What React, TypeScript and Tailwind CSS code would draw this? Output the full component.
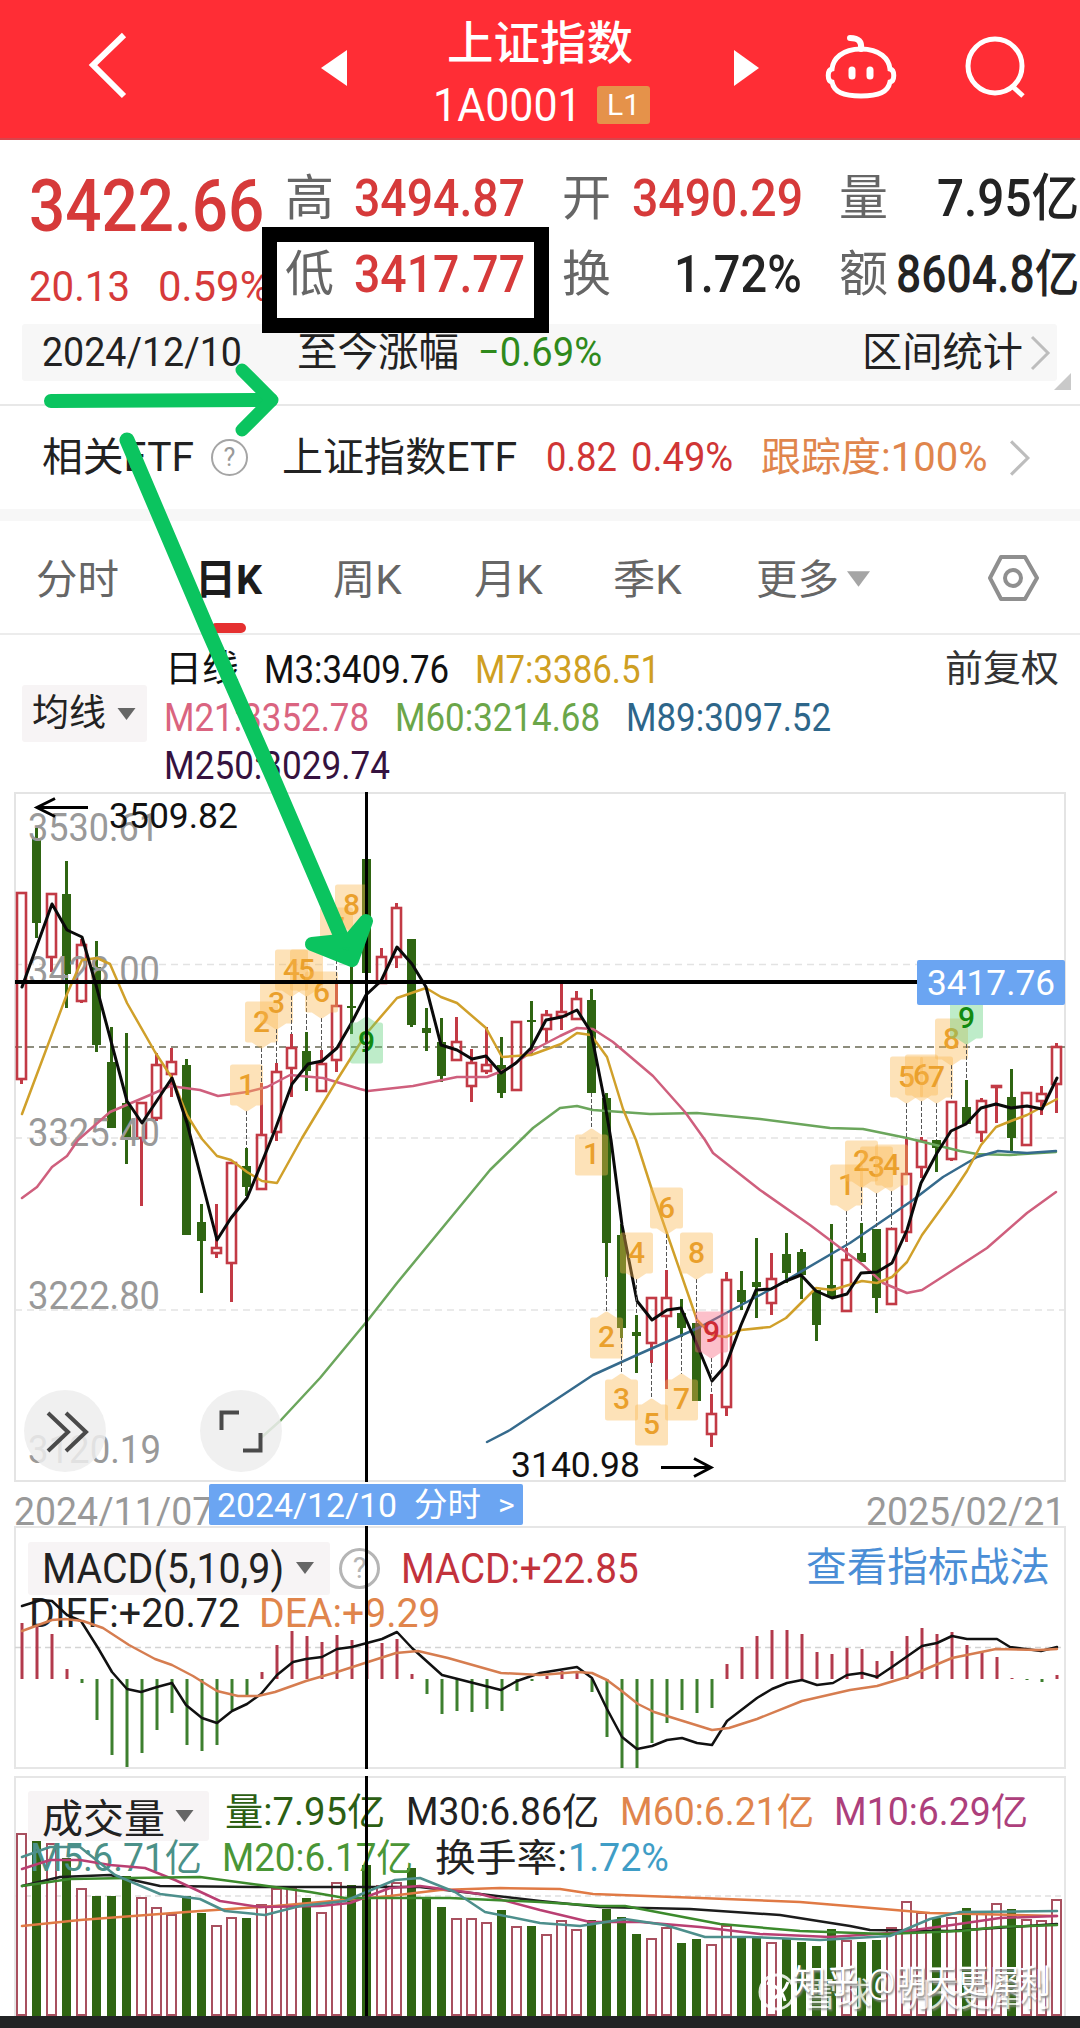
import { useLayoutEffect, useRef, useState } from 'react'
import type { ReactNode } from 'react'
import { clsx } from 'clsx'

type Point = [number, number]

// kind, body top, body bottom, high, low
type Candle = ['r' | 'g', number, number, number, number]

const candles: Candle[] = [
  ['r', 892, 1079, 892, 1084],
  ['g', 838, 923, 828, 938],
  ['r', 893, 957, 893, 972],
  ['g', 894, 974, 861, 1008],
  ['r', 944, 1001, 939, 1003],
  ['g', 967, 1045, 941, 1052],
  ['g', 1062, 1128, 1027, 1128],
  ['g', 1103, 1137, 1033, 1164],
  ['r', 1102, 1138, 1102, 1206],
  ['r', 1064, 1118, 1053, 1121],
  ['r', 1061, 1074, 1048, 1097],
  ['g', 1065, 1235, 1059, 1235],
  ['g', 1222, 1241, 1204, 1293],
  ['r', 1247, 1253, 1204, 1258],
  ['r', 1162, 1263, 1162, 1302],
  ['g', 1166, 1187, 1148, 1196],
  ['r', 1134, 1189, 1083, 1189],
  ['r', 1071, 1132, 1063, 1141],
  ['r', 1047, 1068, 1034, 1097],
  ['g', 1051, 1071, 1032, 1091],
  ['r', 1063, 1091, 1050, 1091],
  ['r', 1005, 1060, 983, 1072],
  ['g', 1006, 1008, 965, 1034],
  ['g', 859, 973, 859, 973],
  ['r', 956, 983, 948, 983],
  ['r', 907, 957, 903, 968],
  ['g', 939, 1025, 939, 1027],
  ['g', 1028, 1033, 1008, 1051],
  ['g', 1042, 1076, 1018, 1082],
  ['r', 1041, 1060, 1017, 1060],
  ['r', 1062, 1086, 1049, 1102],
  ['r', 1064, 1071, 1027, 1074],
  ['g', 1065, 1093, 1037, 1098],
  ['r', 1021, 1090, 1021, 1090],
  ['g', 1020, 1022, 1001, 1054],
  ['r', 1014, 1029, 1010, 1043],
  ['r', 1011, 1016, 980, 1030],
  ['r', 998, 1019, 991, 1019],
  ['g', 1000, 1093, 989, 1093],
  ['g', 1098, 1243, 1093, 1277],
  ['g', 1235, 1328, 1224, 1338],
  ['g', 1332, 1336, 1315, 1373],
  ['r', 1297, 1343, 1297, 1363],
  ['r', 1297, 1316, 1270, 1389],
  ['g', 1313, 1328, 1299, 1337],
  ['g', 1323, 1401, 1323, 1401],
  ['r', 1413, 1434, 1394, 1447],
  ['r', 1279, 1407, 1272, 1416],
  ['g', 1290, 1302, 1271, 1310],
  ['g', 1282, 1287, 1238, 1318],
  ['r', 1278, 1303, 1253, 1315],
  ['g', 1254, 1273, 1233, 1283],
  ['g', 1252, 1275, 1249, 1299],
  ['g', 1290, 1325, 1290, 1341],
  ['g', 1285, 1297, 1224, 1297],
  ['r', 1259, 1311, 1248, 1311],
  ['g', 1253, 1262, 1223, 1262],
  ['g', 1229, 1298, 1229, 1313],
  ['r', 1228, 1304, 1228, 1304],
  ['r', 1173, 1232, 1139, 1242],
  ['r', 1140, 1167, 1137, 1178],
  ['g', 1140, 1148, 1140, 1172],
  ['r', 1101, 1159, 1101, 1161],
  ['g', 1107, 1124, 1080, 1124],
  ['r', 1100, 1132, 1098, 1142],
  ['r', 1085, 1087, 1085, 1123],
  ['g', 1097, 1138, 1069, 1153],
  ['r', 1092, 1145, 1092, 1145],
  ['r', 1093, 1101, 1086, 1115],
  ['r', 1046, 1084, 1043, 1113],
]

const m3: Point[] = [
  [22, 987], [52, 904], [67, 930], [82, 937], [96, 985], [127, 1101], [142, 1123], [172, 1078],
  [187, 1123], [217, 1240], [231, 1218], [247, 1198], [262, 1162], [275, 1130], [292, 1084],
  [308, 1064], [322, 1061], [337, 1048], [352, 1022], [366, 995], [381, 981], [397, 947],
  [412, 964], [426, 987], [441, 1045], [457, 1050], [472, 1059], [486, 1056], [501, 1073],
  [516, 1063], [531, 1048], [546, 1020], [562, 1017], [577, 1010], [591, 1032], [604, 1098],
  [611, 1140], [622, 1225], [637, 1301], [652, 1320], [667, 1310], [681, 1308], [695, 1340],
  [712, 1381], [726, 1365], [741, 1325], [756, 1290], [771, 1289], [786, 1281], [801, 1275],
  [816, 1291], [832, 1298], [847, 1294], [861, 1273], [877, 1272], [892, 1263], [907, 1230],
  [921, 1183], [937, 1153], [951, 1131], [966, 1124], [981, 1108], [996, 1104], [1011, 1108],
  [1027, 1106], [1042, 1109], [1057, 1078],
]
const m7: Point[] = [
  [22, 1114], [67, 994], [82, 960], [97, 958], [110, 964], [127, 1003], [155, 1052], [172, 1078],
  [187, 1115], [202, 1139], [217, 1156], [231, 1160], [247, 1172], [262, 1181], [277, 1183],
  [302, 1138], [337, 1080], [366, 1034], [397, 998], [426, 988], [441, 997], [457, 1003],
  [486, 1028], [502, 1057], [531, 1055], [561, 1044], [577, 1033], [591, 1035], [607, 1057],
  [623, 1109], [636, 1140], [652, 1190], [697, 1320], [712, 1335], [726, 1337], [741, 1330],
  [770, 1327], [786, 1318], [816, 1288], [832, 1290], [862, 1281], [877, 1283], [892, 1277],
  [907, 1262], [922, 1235], [951, 1195], [967, 1171], [981, 1145], [996, 1127], [1011, 1121],
  [1027, 1115], [1042, 1107], [1057, 1099],
]
const m21: Point[] = [
  [22, 1198], [37, 1187], [52, 1167], [67, 1156], [78, 1140], [110, 1112], [150, 1095],
  [170, 1086], [200, 1090], [218, 1096], [247, 1092], [267, 1087], [290, 1075], [323, 1078],
  [360, 1089], [368, 1091], [413, 1086], [457, 1077], [487, 1077], [507, 1069], [537, 1048],
  [560, 1036], [577, 1028], [593, 1029], [613, 1042], [653, 1076], [685, 1112], [705, 1140],
  [713, 1153], [760, 1190], [810, 1225], [863, 1265], [883, 1283], [907, 1293], [922, 1290],
  [950, 1272], [987, 1248], [1027, 1213], [1056, 1192],
]
const m60: Point[] = [
  [262, 1437], [281, 1420], [320, 1378], [368, 1320], [397, 1283], [490, 1170], [533, 1128],
  [560, 1108], [577, 1106], [593, 1110], [650, 1114], [697, 1113], [760, 1119], [830, 1128],
  [863, 1129], [907, 1138], [960, 1151], [977, 1154], [1010, 1155], [1056, 1152],
]
const m89: Point[] = [
  [487, 1442], [510, 1430], [593, 1375], [637, 1355], [698, 1328], [760, 1295], [773, 1288],
  [850, 1243], [913, 1200], [943, 1177], [977, 1157], [998, 1151], [1027, 1153], [1056, 1151],
]

// candle index, digit, y of the flat edge, direction of the tip
const pins: [number, string, number, 'up' | 'down', string?][] = [
  [15, '1', 1065, 'down'],
  [16, '2', 1002, 'down'],
  [17, '3', 983, 'down'],
  [18, '4', 950, 'down'],
  [19, '5', 950, 'down'],
  [20, '6', 972, 'down'],
  [21, '7', 908, 'down'],
  [22, '8', 885, 'down'],
  [23, '9', 1063, 'up', 'green'],
  [38, '1', 1175, 'up'],
  [39, '2', 1358, 'up'],
  [40, '3', 1420, 'up'],
  [41, '4', 1233, 'down'],
  [42, '5', 1445, 'up'],
  [43, '6', 1188, 'down'],
  [44, '7', 1420, 'up'],
  [45, '8', 1233, 'down'],
  [46, '9', 1312, 'down', 'red'],
  [55, '1', 1165, 'down'],
  [56, '2', 1141, 'down'],
  [57, '3', 1147, 'down'],
  [58, '4', 1145, 'down'],
  [59, '5', 1057, 'down'],
  [60, '6', 1055, 'down'],
  [61, '7', 1057, 'down'],
  [62, '8', 1019, 'down'],
  [63, '9', 998, 'down', 'green'],
]

// end of each histogram bar, the zero line is 1679
const macdBars = [
  1623, 1626, 1634, 1669, 1683, 1720, 1755, 1767, 1753, 1730, 1713, 1745, 1751, 1745, 1710, 1697,
  1672, 1645, 1631, 1636, 1642, 1635, 1640, 1642, 1643, 1639, 1674, 1694, 1714, 1711, 1712, 1709,
  1711, 1691, 1681, 1676, 1671, 1671, 1692, 1737, 1768, 1768, 1743, 1723, 1710, 1713, 1708, 1664,
  1647, 1636, 1630, 1630, 1634, 1652, 1654, 1648, 1649, 1661, 1651, 1636, 1628, 1634, 1632, 1645,
  1652, 1657, 1678, 1680, 1682, 1675,
]
const diff: Point[] = [
  [22, 1606], [41, 1600], [52, 1601], [67, 1615], [81, 1621], [98, 1648], [112, 1672],
  [127, 1689], [141, 1692], [157, 1687], [172, 1683], [186, 1705], [202, 1718], [217, 1723],
  [232, 1711], [247, 1704], [261, 1694], [277, 1675], [293, 1662], [306, 1659], [322, 1657],
  [337, 1649], [352, 1647], [382, 1639], [397, 1632], [412, 1648], [442, 1675], [501, 1690],
  [517, 1681], [540, 1673], [577, 1667], [592, 1678], [607, 1709], [622, 1737], [637, 1749],
  [652, 1746], [667, 1740], [682, 1738], [697, 1743], [712, 1745], [727, 1721], [757, 1698],
  [772, 1689], [787, 1683], [802, 1680], [817, 1685], [833, 1683], [847, 1675], [862, 1673],
  [877, 1677], [892, 1667], [922, 1646], [937, 1643], [952, 1636], [967, 1639], [997, 1639],
  [1010, 1647], [1041, 1651], [1057, 1647],
]
const dea: Point[] = [
  [22, 1631], [52, 1620], [65, 1619], [83, 1621], [103, 1628], [129, 1645], [155, 1659],
  [172, 1665], [193, 1676], [217, 1691], [238, 1696], [258, 1696], [275, 1692], [306, 1681],
  [337, 1672], [368, 1662], [396, 1653], [418, 1651], [448, 1658], [501, 1673], [540, 1675],
  [577, 1672], [592, 1673], [607, 1680], [623, 1692], [638, 1704], [654, 1712], [683, 1721],
  [712, 1730], [729, 1728], [757, 1719], [802, 1701], [850, 1690], [877, 1686], [907, 1677],
  [952, 1658], [996, 1649], [1039, 1650], [1057, 1649],
]

const volumes = [
  1833, 1834, 1843, 1858, 1888, 1896, 1896, 1876, 1897, 1907, 1914, 1896, 1913, 1925, 1917, 1918,
  1904, 1888, 1888, 1898, 1912, 1882, 1885, 1865, 1885, 1882, 1868, 1899, 1907, 1918, 1918, 1922,
  1910, 1926, 1926, 1934, 1920, 1929, 1920, 1909, 1917, 1934, 1938, 1927, 1943, 1939, 1944, 1925,
  1938, 1937, 1942, 1939, 1942, 1946, 1929, 1940, 1942, 1940, 1927, 1901, 1912, 1918, 1917, 1908,
  1913, 1903, 1909, 1919, 1920, 1899,
]
// volume bars are coloured on their own
const volumeKinds = 'rgrgrgggrrrggrrgrrrgrrggrrgggrrrgrgrrrggggrrggrrggrggggrggrrrgrgrrgrrr'

const volumeLines: { color: string; points: Point[] }[] = [
  {
    color: '#1c1c1c',
    points: [[22, 1886], [60, 1877], [110, 1875], [160, 1886], [260, 1887], [420, 1887], [480, 1894], [540, 1901], [600, 1907], [690, 1909], [780, 1915], [850, 1926], [870, 1930], [950, 1931], [1057, 1924]],
  },
  {
    color: '#e07a45',
    points: [[22, 1926], [80, 1920], [200, 1911], [275, 1906], [390, 1896], [440, 1890], [500, 1888], [560, 1889], [593, 1894], [700, 1898], [800, 1902], [860, 1907], [930, 1913], [1057, 1916]],
  },
  {
    color: '#b93f72',
    points: [[22, 1869], [50, 1860], [80, 1860], [110, 1865], [145, 1868], [175, 1880], [220, 1901], [260, 1907], [320, 1906], [350, 1903], [390, 1888], [420, 1886], [480, 1894], [540, 1910], [590, 1922], [640, 1922], [700, 1927], [760, 1934], [830, 1937], [890, 1933], [945, 1926], [1000, 1918], [1057, 1916]],
  },
  {
    color: '#3c8a2c',
    points: [[22, 1886], [70, 1879], [130, 1878], [200, 1877], [260, 1885], [310, 1892], [345, 1898], [450, 1898], [540, 1902], [600, 1906], [625, 1906], [720, 1924], [800, 1931], [885, 1934], [960, 1931], [1000, 1927], [1057, 1925]],
  },
  {
    color: '#4d8f8c',
    points: [[22, 1857], [50, 1847], [80, 1847], [115, 1875], [160, 1894], [200, 1899], [225, 1911], [265, 1915], [300, 1906], [345, 1901], [395, 1880], [420, 1878], [455, 1892], [485, 1912], [540, 1923], [580, 1926], [625, 1919], [665, 1925], [705, 1937], [750, 1937], [820, 1940], [890, 1936], [930, 1919], [960, 1912], [1057, 1911]],
  },
]

const RED = '#c23a45'
const GREEN = '#2f6512'

const xOf = (i: number) => 21.5 + i * 15
const toPoints = (points: Point[]) => points.map((p) => p.join(',')).join(' ')

// Stretches its text to the width of the box
function Fit({ className, children }: { className: string; children: ReactNode }) {
  const box = useRef<HTMLDivElement>(null)
  const text = useRef<HTMLSpanElement>(null)
  const [scale, setScale] = useState(1)

  useLayoutEffect(() => {
    if (box.current && text.current) {
      setScale(box.current.clientWidth / text.current.offsetWidth)
    }
  }, [])

  return (
    <div ref={box} className={clsx('shrink-0 whitespace-nowrap', className)}>
      <span
        ref={text}
        className="inline-block origin-left"
        style={{ transform: `scaleX(${scale})` }}
      >
        {children}
      </span>
    </div>
  )
}

function Header() {
  return (
    <header className="flex h-[140px] items-start border-b-2 border-[#d9434b] bg-[#ff2d35] text-white">
      <svg className="ml-[86px] mt-[29px] h-[72px] w-[44px]" viewBox="0 0 44 72" fill="none">
        <path d="M38 6 7 36l31 31" stroke="currentColor" strokeWidth="6" />
      </svg>
      <svg className="ml-[191px] mt-[50px] h-[36px] w-[26px]" viewBox="0 0 26 36">
        <path d="M26 0v36L0 18z" fill="currentColor" />
      </svg>
      <div className="ml-[88px] mt-[17px] flex w-[216px] flex-col">
        <Fit className="ml-[12px] h-[53px] w-[186px] text-[46px] font-medium leading-[52px]">
          上证指数
        </Fit>
        <div className="flex h-[70px] items-center">
          <Fit className="ml-[-2px] w-[149px] text-[47px] leading-[70px]">1A0001</Fit>
          <div className="ml-[15px] flex h-[38px] w-[53px] items-center justify-center rounded-[3px] bg-[#e5924a] text-[30px] leading-[38px]">
            L1
          </div>
        </div>
      </div>
      <svg className="ml-[83px] mt-[50px] h-[36px] w-[26px]" viewBox="0 0 26 36">
        <path d="M0 0v36l25-18z" fill="currentColor" />
      </svg>
      <svg
        className="ml-[64px] mt-[32px] h-[70px] w-[74px]"
        viewBox="0 0 74 70"
        fill="none"
        stroke="currentColor"
        strokeLinecap="round"
      >
        <path
          d="M37 17C18 17 9 27 8 37C3 38 3 49 8 50C10 60 19 64 37 64C55 64 64 60 66 50C71 49 71 38 66 37C65 27 56 17 37 17Z"
          strokeWidth="5"
        />
        <path d="M37 17C38 10 35 6 26 6" strokeWidth="6" />
        <path d="M28 38v6M46 38v6" strokeWidth="7" />
      </svg>
      <svg
        className="ml-[64px] mt-[34px] h-[68px] w-[68px]"
        viewBox="0 0 68 68"
        fill="none"
        stroke="currentColor"
        strokeWidth="5"
      >
        <circle cx="33" cy="32" r="27" />
        <path d="m50 52 11 10" />
      </svg>
    </header>
  )
}

function Quote() {
  return (
    <section className="relative flex h-[184px] text-[51px] font-medium leading-[76px] text-[#232323]">
      <div className="ml-[29px] w-[256px] text-[#d63a3a]">
        <Fit className="mt-[29px] h-[74px] w-[235px] text-[73px] leading-[74px]">3422.66</Fit>
        <div className="mt-[12px] flex h-[62px] text-[43px] font-normal leading-[62px]">
          <Fit className="w-[101px]">20.13</Fit>
          <Fit className="ml-[28px] w-[112px]">0.59%</Fit>
        </div>
      </div>
      <div className="mt-[21px] flex flex-col">
        <div className="flex h-[76px]">
          <span className="w-[69px] text-[49px] font-normal text-[#666]">高</span>
          <Fit className="w-[171px] text-[#d63a3a]">3494.87</Fit>
          <span className="ml-[37px] w-[70px] text-[49px] font-normal text-[#666]">开</span>
          <Fit className="w-[171px] text-[#d63a3a]">3490.29</Fit>
          <span className="ml-[36px] w-[98px] text-[49px] font-normal text-[#666]">量</span>
          <Fit className="w-[142px]">7.95亿</Fit>
        </div>
        <div className="flex h-[76px]">
          <span className="w-[69px] text-[49px] font-normal text-[#666]">低</span>
          <Fit className="w-[171px] text-[#d63a3a]">3417.77</Fit>
          <span className="ml-[37px] w-[112px] text-[49px] font-normal text-[#666]">换</span>
          <Fit className="w-[128px]">1.72%</Fit>
          <span className="ml-[37px] w-[57px] text-[49px] font-normal text-[#666]">额</span>
          <Fit className="w-[183px]">8604.8亿</Fit>
        </div>
      </div>
      <div className="absolute left-[262px] top-[87px] z-10 h-[106px] w-[287px] border-[15px] border-black" />
    </section>
  )
}

function Chevron({ className }: { className?: string }) {
  return (
    <svg className={className} viewBox="0 0 22 36" fill="none">
      <path d="m2 2 16 16L2 34" stroke="#bdbdbd" strokeWidth="3" />
    </svg>
  )
}

function Caret({ className }: { className?: string }) {
  return (
    <svg className={className} viewBox="0 0 18 12">
      <path d="M0 0h18L9 12z" fill="currentColor" />
    </svg>
  )
}

function RangeBar() {
  return (
    <section className="relative flex h-[82px] border-b-2 border-[#e8e8e8] pl-[22px]">
      <div className="flex h-[57px] w-[1035px] items-center rounded-[3px] bg-[#f7f7f7] text-[40px] leading-[56px] text-[#222]">
        <Fit className="ml-[20px] w-[200px]">2024/12/10</Fit>
        <Fit className="ml-[55px] w-[162px]">至今涨幅</Fit>
        <Fit className="ml-[19px] w-[124px] text-[#2f8a1c]">−0.69%</Fit>
        <Fit className="ml-[260px] w-[161px] leading-[59px]">区间统计</Fit>
        <Chevron className="ml-[7px] h-[36px] w-[22px]" />
      </div>
      <svg className="absolute left-[1054px] top-[49px] h-[17px] w-[17px]" viewBox="0 0 17 17">
        <path d="M17 0v17H0z" fill="#c9c9c9" />
      </svg>
    </section>
  )
}

function EtfRow() {
  return (
    <section className="flex h-[115px] items-center border-b-[12px] border-[#f7f7f7] text-[40px] leading-[103px] text-[#222]">
      <Fit className="ml-[42px] w-[152px]">相关ETF</Fit>
      <div className="ml-[17px] flex h-[37px] w-[37px] items-center justify-center rounded-full border-2 border-[#a5a5a5] text-[25px] leading-[34px] text-[#999]">
        ?
      </div>
      <Fit className="ml-[34px] w-[235px]">上证指数ETF</Fit>
      <Fit className="ml-[29px] w-[71px] text-[#d03535]">0.82</Fit>
      <Fit className="ml-[14px] w-[102px] text-[#d03535]">0.49%</Fit>
      <Fit className="ml-[28px] w-[226px] text-[#e0854c]">跟踪度:100%</Fit>
      <Chevron className="ml-[22px] h-[38px] w-[23px]" />
    </section>
  )
}

function Tabs() {
  return (
    <nav className="flex h-[114px] border-b-2 border-[#ececec] text-[41px] leading-[118px] text-[#666]">
      <Fit className="ml-[36px] w-[83px]">分时</Fit>
      <div className="ml-[76px] w-[67px]">
        <Fit className="h-[102px] w-[67px] font-bold text-[#1c1c1c]">日K</Fit>
        <div className="ml-[16px] h-[10px] w-[35px] rounded-full bg-[#e53030]" />
      </div>
      <Fit className="ml-[71px] w-[69px]">周K</Fit>
      <Fit className="ml-[72px] w-[69px]">月K</Fit>
      <Fit className="ml-[70px] w-[69px]">季K</Fit>
      <Fit className="ml-[74px] w-[83px]">更多</Fit>
      <Caret className="ml-[8px] mt-[49px] h-[18px] w-[23px] text-[#a5a5a5]" />
      <svg
        className="ml-[117px] mt-[33px] h-[48px] w-[52px]"
        viewBox="0 0 52 48"
        fill="none"
        stroke="#8f8f8f"
        strokeWidth="4"
        strokeLinejoin="round"
      >
        <path d="M14 3h24l12 21-12 21H14L3 24z" />
        <circle cx="26" cy="24" r="8" />
      </svg>
    </nav>
  )
}

function MaLegend() {
  return (
    <section className="flex h-[157px] pt-[11px] text-[39px] leading-[48px]">
      <div className="ml-[22px] mt-[39px] flex h-[57px] w-[125px] items-center rounded-[3px] bg-[#f7f4f5] text-[37px] leading-[57px] text-[#222]">
        <Fit className="ml-[10px] w-[74px]">均线</Fit>
        <Caret className="ml-[11px] h-[12px] w-[19px] text-[#666]" />
      </div>
      <div className="ml-[17px] flex w-[780px] flex-col text-[#111]">
        <div className="flex">
          <Fit className="ml-[1px] w-[74px] text-[37px]">日线</Fit>
          <Fit className="ml-[25px] w-[185px]">M3:3409.76</Fit>
          <Fit className="ml-[26px] w-[185px] text-[#cf9f22]">M7:3386.51</Fit>
        </div>
        <div className="flex">
          <Fit className="w-[205px] text-[#da6480]">M21:3352.78</Fit>
          <Fit className="ml-[26px] w-[205px] text-[#6ba649]">M60:3214.68</Fit>
          <Fit className="ml-[26px] w-[205px] text-[#2d668a]">M89:3097.52</Fit>
        </div>
        <Fit className="w-[226px] text-[#35123f]">M250:3029.74</Fit>
      </div>
      <Fit className="ml-[1px] w-[114px] text-[37px] text-[#333]">前复权</Fit>
    </section>
  )
}

function Pin({ index, digit, y, tip, tone }: { index: number; digit: string; y: number; tip: 'up' | 'down'; tone?: string }) {
  const x = xOf(index)
  const [, , , high, low] = candles[index]
  const fill = tone === 'green' ? '#5fd07a' : tone === 'red' ? '#f8637c' : '#fbb850'
  const color = tone === 'green' ? '#118a11' : tone === 'red' ? '#cf2b35' : '#eaa02c'
  const shape =
    tip === 'down'
      ? `M${x - 14} ${y + 2}h28v36h-5l-9 6l-9 -6h-5z`
      : `M${x - 14} ${y - 2}h28v-36h-5l-9 -6l-9 6h-5z`
  return (
    <g>
      <line
        x1={x}
        x2={x}
        y1={tip === 'down' ? y + 46 : low}
        y2={tip === 'down' ? high : y - 46}
        stroke="#555"
        strokeDasharray="4 2"
      />
      <g opacity="0.4">
        <path d={shape} fill={fill} stroke={fill} strokeWidth="5" strokeLinejoin="round" />
      </g>
      <text
        x={x}
        y={tip === 'down' ? y + 30 : y - 11}
        fontSize="30"
        fontWeight="500"
        textAnchor="middle"
        fill={color}
      >
        {digit}
      </text>
    </g>
  )
}

function Line({ points, color, width = 2.5 }: { points: Point[]; color: string; width?: number }) {
  return (
    <polyline
      points={toPoints(points)}
      fill="none"
      stroke={color}
      strokeWidth={width}
      strokeLinejoin="round"
      strokeLinecap="round"
    />
  )
}

function AxisLabel({ x, y, w, children, fill = '#999', size = 38 }: { x: number; y: number; w: number; children: string; fill?: string; size?: number }) {
  return (
    <text x={x} y={y} fontSize={size} fill={fill} textLength={w} lengthAdjust="spacingAndGlyphs">
      {children}
    </text>
  )
}

function PriceChart() {
  return (
    <svg className="block h-[690px] w-full" viewBox="0 792 1080 690">
      <rect x="15" y="793" width="1050" height="688" fill="none" stroke="#e4e4e4" strokeWidth="2" />
      <g stroke="#e3e3e3" strokeWidth="1.5" strokeDasharray="7 5">
        <path d="M15 964.500H1065M15 1138H1065M15 1310H1065" />
      </g>
      <path d="M15 1047H1065" stroke="#8d8d7d" strokeWidth="2" strokeDasharray="7 5" />

      {candles.map(([kind, top, bottom, high, low], i) => {
        const x = xOf(i)
        if (kind === 'g') {
          return (
            <g key={i} fill={GREEN}>
              <rect x={x - 1.5} y={high} width="3" height={low - high} />
              <rect x={x - 4.5} y={top} width="9" height={bottom - top} />
            </g>
          )
        }
        return (
          <g key={i} fill="none" stroke={RED}>
            <path d={`M${x} ${high}V${top}M${x} ${bottom}V${low}`} strokeWidth="3" />
            <rect
              x={x - 4.5}
              y={top + 1}
              width="9"
              height={Math.max(bottom - top - 1, 1)}
              strokeWidth="2.600"
            />
          </g>
        )
      })}

      <AxisLabel x={28} y={841} w={131}>3530.61</AxisLabel>
      <AxisLabel x={28} y={984} w={132}>3428.00</AxisLabel>
      <AxisLabel x={28} y={1146} w={132}>3325.40</AxisLabel>
      <AxisLabel x={28} y={1309} w={132}>3222.80</AxisLabel>
      <AxisLabel x={28} y={1463} w={133}>3120.19</AxisLabel>

      <Line points={m60} color="#6ba65c" />
      <Line points={m89} color="#356a8c" />
      <Line points={m21} color="#cf5f7d" />
      <Line points={m7} color="#d0a02a" />
      <Line points={m3} color="#0a0a0a" width={3} />

      {pins.map(([index, digit, y, tip, tone]) => (
        <Pin key={index} index={index} digit={digit} y={y} tip={tip} tone={tone} />
      ))}

      <AxisLabel x={109} y={828} w={129} fill="#111" size={35}>3509.82</AxisLabel>
      <path d="M88 807.500H38M55 798.500l-18 9 18 9" fill="none" stroke="#000" strokeWidth="3" />
      <AxisLabel x={511} y={1477} w={129} fill="#111" size={35}>3140.98</AxisLabel>
      <path d="M661 1467.500h50M694 1458.500l17 9-17 9" fill="none" stroke="#000" strokeWidth="3" />

      <path d="M15 982H920" stroke="#000" strokeWidth="4" />
      <path d="M366.500 792V1482" stroke="#000" strokeWidth="3" />

      <rect x="917" y="960" width="148" height="45" rx="2" fill="#6ba5f2" />
      <AxisLabel x={927} y={995} w={128} fill="#fff" size={35}>3417.76</AxisLabel>

      <g fill="#ededed" fillOpacity="0.85">
        <circle cx="65" cy="1431" r="41" />
        <circle cx="241" cy="1431" r="41" />
      </g>
      <g fill="none" stroke="#4a4a4a" strokeWidth="4">
        <path d="m48 1413 20 19-20 19M66 1413l20 19-20 19" />
        <path d="M239 1412.500h-17.500V1430M243 1450.500h17.500V1433" />
      </g>
    </svg>
  )
}

function DateRow() {
  return (
    <div className="relative flex h-[44px] items-start text-[38px] leading-[61px] text-[#999]">
      <Fit className="ml-[14px] w-[199px]">2024/11/07</Fit>
      <Fit className="ml-[653px] w-[199px]">2025/02/21</Fit>
      <div className="absolute left-[209px] top-[2px] z-10 flex h-[41px] w-[314px] items-center rounded-[2px] bg-[#6ba5f2] text-[34px] leading-[40px] text-white">
        <Fit className="ml-[8px] w-[180px]">2024/12/10</Fit>
        <Fit className="ml-[17px] w-[67px] text-[33px]">分时</Fit>
        <Fit className="ml-[17px] w-[17px] text-[30px]">&gt;</Fit>
      </div>
    </div>
  )
}

function MacdPane() {
  return (
    <section className="relative h-[243px] pt-[15px]">
      <svg className="absolute inset-0 h-[243px] w-full" viewBox="0 1526 1080 243">
        <rect x="15" y="1527" width="1050" height="241" fill="none" stroke="#e6e6e6" strokeWidth="2" />
      </svg>
      <div className="relative flex h-[54px] items-center text-[42px] leading-[53px] text-[#222]">
        <div className="ml-[28px] flex h-[53px] w-[302px] items-center rounded-[3px] bg-[#f7f4f5]">
          <Fit className="ml-[14px] w-[242px]">MACD(5,10,9)</Fit>
          <Caret className="ml-[12px] h-[12px] w-[18px] text-[#666]" />
        </div>
        <div className="ml-[9px] flex h-[41px] w-[41px] items-center justify-center rounded-full border-[3px] border-[#b5b5b5] text-[29px] leading-[36px] text-[#b5b5b5]">
          ?
        </div>
        <Fit className="ml-[21px] w-[238px] text-[#c2323c]">MACD:+22.85</Fit>
        <Fit className="ml-[167px] w-[244px] text-[40px] leading-[56px] text-[#4a8ed6]">
          查看指标战法
        </Fit>
      </div>
      <div className="relative flex h-[36px] text-[40px] leading-[37px] text-[#222]">
        <Fit className="ml-[29px] w-[211px]">DIFF:+20.72</Fit>
        <Fit className="ml-[19px] w-[181px] text-[#e0854c]">DEA:+9.29</Fit>
      </div>
      <svg className="absolute inset-0 h-[243px] w-full" viewBox="0 1526 1080 243">
        <path d="M15 1647.500H1065" stroke="#d4d4d4" strokeWidth="1.500" strokeDasharray="6 4" />
        {macdBars.map((end, i) => (
          <line
            key={i}
            x1={xOf(i) + 0.5}
            x2={xOf(i) + 0.5}
            y1="1679"
            y2={end}
            stroke={end < 1679 ? '#b23a4c' : '#3d7f2e'}
            strokeWidth="3"
          />
        ))}
        <Line points={diff} color="#111" />
        <Line points={dea} color="#d67d50" />
        <path d="M366.500 1526V1769" stroke="#000" strokeWidth="3" />
      </svg>
    </section>
  )
}

function VolumePane() {
  return (
    <section className="relative mt-[7px] h-[240px] pt-[11px]">
      <svg className="absolute inset-0 h-[240px] w-full" viewBox="0 1776 1080 240">
        <path d="M15 2016V1777H1065V2016" fill="none" stroke="#e6e6e6" strokeWidth="2" />
        <path d="M15 1896H1065" stroke="#e0e0e0" strokeWidth="1.500" strokeDasharray="6 4" />
        {volumes.map((top, i) =>
          volumeKinds[i] === 'g' ? (
            <rect key={i} x={xOf(i) - 4.5} y={top} width="9" height={2016 - top} fill={GREEN} />
          ) : (
            <rect
              key={i}
              x={xOf(i) - 4.5}
              y={top + 1}
              width="9"
              height={2014 - top}
              fill="#fff"
              stroke="#a8505f"
              strokeWidth="2"
            />
          ),
        )}
      </svg>
      <div className="relative flex h-[50px] text-[38px] leading-[51px] text-[#222]">
        <div className="ml-[28px] mt-[4px] flex h-[50px] w-[181px] items-center rounded-[3px] bg-[#f7f4f5]">
          <Fit className="ml-[14px] w-[123px] pt-[6px] text-[40px]">成交量</Fit>
          <Caret className="ml-[10px] h-[12px] w-[19px] text-[#666]" />
        </div>
        <Fit className="ml-[16px] w-[160px] text-[#2c5f14]">量:7.95亿</Fit>
        <Fit className="ml-[21px] w-[193px]">M30:6.86亿</Fit>
        <Fit className="ml-[21px] w-[194px] text-[#e0854c]">M60:6.21亿</Fit>
        <Fit className="ml-[20px] w-[194px] text-[#ad3f7c]">M10:6.29亿</Fit>
      </div>
      <div className="relative flex h-[42px] text-[38px] leading-[42px] text-[#222]">
        <Fit className="ml-[30px] w-[172px] text-[#4b9188]">M5:6.71亿</Fit>
        <Fit className="ml-[20px] w-[191px] text-[#4a9636]">M20:6.17亿</Fit>
        <Fit className="ml-[22px] w-[132px]">换手率:</Fit>
        <Fit className="ml-[1px] w-[101px] text-[#3f9dc6]">1.72%</Fit>
      </div>
      <svg className="absolute inset-0 h-[240px] w-full" viewBox="0 1776 1080 240">
        {volumeLines.map(({ color, points }) => (
          <Line key={color} color={color} points={points} />
        ))}
        <path d="M366.500 1776V2016" stroke="#000" strokeWidth="3" />
      </svg>
      <Watermark />
    </section>
  )
}

function Watermark() {
  return (
    <div className="absolute left-[757px] top-[186px] h-[54px] w-[300px] text-[33px] leading-[40px] text-white [text-shadow:1px_2px_2px_#888]">
      <svg className="absolute left-[1px] top-[11px] h-[38px] w-[38px]" viewBox="0 0 38 38" fill="none">
        <circle cx="19" cy="19" r="17" stroke="#fff" strokeOpacity="0.85" strokeWidth="3" />
        <path d="M9 10c8 2 16 8 18 18M30 9c-3 10-11 15-19 19" stroke="#fff" strokeWidth="3" />
      </svg>
      <div className="absolute left-[46px] top-[13px] flex opacity-80">
        <Fit className="w-[68px]">雪球</Fit>
        <Fit className="ml-[28px] w-[152px]">明天更犀利</Fit>
      </div>
      <div className="absolute left-[36px] top-0 flex">
        <Fit className="w-[66px]">知乎</Fit>
        <Fit className="ml-[8px] w-[184px]">@明天更犀利</Fit>
      </div>
    </div>
  )
}

// Hand-drawn marks over the whole screen
function Arrows() {
  return (
    <svg
      className="pointer-events-none absolute left-0 top-0 z-20 h-[1000px] w-[1080px]"
      viewBox="0 0 1080 1000"
      fill="none"
      stroke="#0bc45f"
      strokeLinecap="round"
      strokeLinejoin="round"
    >
      <path d="M51 401 271 400" strokeWidth="14" />
      <path d="M242 370 272 400 242 430" strokeWidth="13" />
      <path d="M127 440 207 628 274 780 349 955" strokeWidth="15" />
      <path d="M312 944 352 960 366 921 350 940z" strokeWidth="14" fill="#0bc45f" />
    </svg>
  )
}

export default function App() {
  return (
    <main className="relative h-[2028px] w-[1080px] overflow-hidden bg-white font-['Roboto','Noto_Sans_CJK_SC',sans-serif]">
      <Header />
      <Quote />
      <RangeBar />
      <EtfRow />
      <Tabs />
      <MaLegend />
      <PriceChart />
      <DateRow />
      <MacdPane />
      <VolumePane />
      <div className="h-[12px] bg-[#222425]" />
      <Arrows />
    </main>
  )
}
